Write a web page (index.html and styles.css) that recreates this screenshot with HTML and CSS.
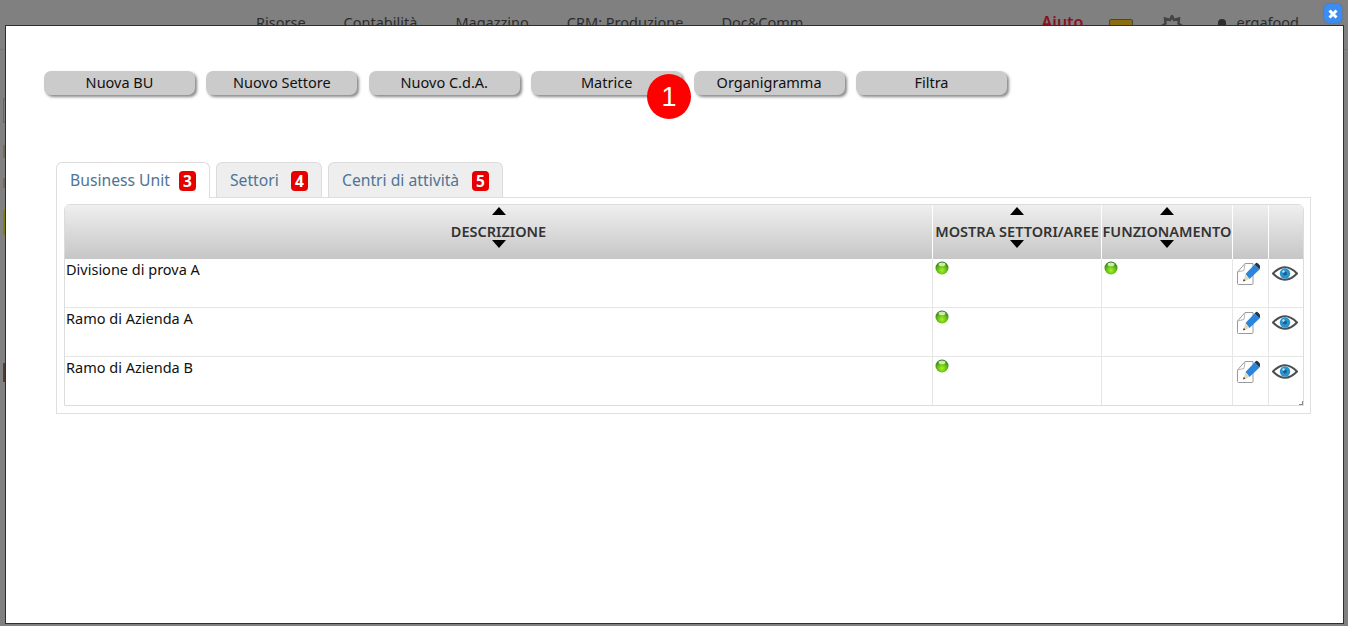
FILE: index.html
```html
<!DOCTYPE html>
<html>
<head>
    <meta name="viewport" content="width=device-width, initial-scale=1.0">
    <title>Business Unit</title>
    <link rel="stylesheet" href="styles.css">
</head>
<body>
<svg class="defs" width="0" height="0">
    <defs>
        <radialGradient id="led" cx="50%" cy="68%" r="62%">
            <stop offset="0" stop-color="#a8f02c"/>
            <stop offset="0.6" stop-color="#62bb12"/>
            <stop offset="1" stop-color="#2f7a1c"/>
        </radialGradient>
        <symbol id="dot" viewBox="0 0 14 14">
            <circle cx="7" cy="7" r="6.500" fill="url(#led)"/>
            <ellipse cx="7" cy="3.400" rx="3.400" ry="1.800" fill="#cfeab0"/>
        </symbol>
        <symbol id="edit" viewBox="0 0 24 26">
            <path d="M9 2.500 H17 V22.500 Q17 23.500 16 23.500 H2.500 Q1.500 23.500 1.500 22.500 V11 Z" fill="#fff" stroke="#9a9a9a" stroke-width="1"/>
            <path d="M9 2.500 L8 9.500 L1.500 11" fill="none" stroke="#b5b5b5" stroke-width="1"/>
            <path d="M9.500 13 L18.500 3.500 L23.500 8.500 L13.500 18 Z" fill="#2a86dc"/>
            <path d="M18.500 3.500 L20 2 Q21 1.500 22 2.500 L24 4.500 Q24.500 5.500 23.500 8.500 Z" fill="#20364f"/>
            <path d="M9.500 13 L13.500 18 L7 20.500 Z" fill="#e8d9bb"/>
            <path d="M7.800 18 L9.500 19.500 L7 20.500 Z" fill="#333"/>
        </symbol>
        <symbol id="eye" viewBox="0 0 26 15">
            <path d="M1 7.500 Q13 -5 25 7.500 Q13 20 1 7.500 Z" fill="#fff" stroke="#4a4f52" stroke-width="2"/>
            <circle cx="13" cy="7.500" r="5.200" fill="#2b93cf"/>
            <circle cx="13" cy="7.500" r="2" fill="#14618f"/>
            <circle cx="11.500" cy="5.500" r="1.200" fill="#bfe4f5"/>
        </symbol>
    </defs>
</svg>

<!-- page behind the dialog -->
<header class="topbar">
    <nav class="topmenu">
        <span>Risorse</span>
        <span>Contabilità</span>
        <span>Magazzino</span>
        <span>CRM: Produzione</span>
        <span>Doc&amp;Comm</span>
    </nav>
    <div class="topright">
        <span class="help">Aiuto</span>
        <span class="mailbox"></span>
        <svg class="gear" width="22" height="22" viewBox="0 0 22 22">
            <path d="M11 1 L13 5 L18 3.500 L17.500 8.500 L21 11 L17.500 13.500 L18 18.500 L13 17 L11 21 L9 17 L4 18.500 L4.500 13.500 L1 11 L4.500 8.500 L4 3.500 L9 5 Z" fill="none" stroke="#444" stroke-width="2.500"/>
        </svg>
        <span class="person"></span>
        <span class="username">ergafood</span>
    </div>
</header>
<div class="sidetraces">
    <span class="trace trace-box"></span>
    <span class="trace trace-brown"></span>
    <span class="trace trace-brown trace-short"></span>
    <span class="trace trace-yellow"></span>
    <span class="trace trace-dark"></span>
</div>

<div class="dialog">
    <div class="toolbar">
        <button class="btn">Nuova BU</button>
        <button class="btn">Nuovo Settore</button>
        <button class="btn">Nuovo C.d.A.</button>
        <button class="btn">Matrice</button>
        <button class="btn">Organigramma</button>
        <button class="btn">Filtra</button>
    </div>

    <div class="tabs">
        <ul class="tablist">
            <li class="tab tab-bu active">Business Unit <b class="count">3</b></li>
            <li class="tab tab-set">Settori <b class="count">4</b></li>
            <li class="tab tab-cda">Centri di attività <b class="count">5</b></li>
        </ul>
        <div class="panel">
            <div class="tablewrap">
                <table class="grid">
                    <colgroup>
                        <col class="col-desc">
                        <col class="col-show">
                        <col class="col-func">
                        <col class="col-edit">
                        <col class="col-view">
                    </colgroup>
                    <thead>
                        <tr>
                            <th><div class="sort"><i class="up"></i><span>DESCRIZIONE</span><i class="down"></i></div></th>
                            <th><div class="sort"><i class="up"></i><span>MOSTRA SETTORI/AREE</span><i class="down"></i></div></th>
                            <th><div class="sort"><i class="up"></i><span>FUNZIONAMENTO</span><i class="down"></i></div></th>
                            <th></th>
                            <th></th>
                        </tr>
                    </thead>
                    <tbody>
                        <tr>
                            <td>Divisione di prova A</td>
                            <td><svg class="led"><use href="#dot"/></svg></td>
                            <td><svg class="led"><use href="#dot"/></svg></td>
                            <td><svg class="ico-edit"><use href="#edit"/></svg></td>
                            <td><svg class="ico-eye"><use href="#eye"/></svg></td>
                        </tr>
                        <tr>
                            <td>Ramo di Azienda A</td>
                            <td><svg class="led"><use href="#dot"/></svg></td>
                            <td></td>
                            <td><svg class="ico-edit"><use href="#edit"/></svg></td>
                            <td><svg class="ico-eye"><use href="#eye"/></svg></td>
                        </tr>
                        <tr>
                            <td>Ramo di Azienda B</td>
                            <td><svg class="led"><use href="#dot"/></svg></td>
                            <td></td>
                            <td><svg class="ico-edit"><use href="#edit"/></svg></td>
                            <td><svg class="ico-eye"><use href="#eye"/></svg></td>
                        </tr>
                    </tbody>
                </table>
                <span class="grip"></span>
            </div>
        </div>
    </div>
</div>

<span class="marker">1</span>
<button class="close" aria-label="Chiudi">
    <svg width="10" height="10" viewBox="0 0 10 10"><path d="M1.500 1.500 L8.500 8.500 M8.500 1.500 L1.500 8.500" stroke="#fff" stroke-width="3"/></svg>
</button>
</body>
</html>
```

FILE: styles.css
```css
* {
    margin: 0;
    padding: 0;
    box-sizing: border-box;
}
html, body {
    height: 100%;
    overflow: hidden;
}
body {
    background: #808080;
    font-family: 'Noto Sans', 'Open Sans', sans-serif;
    font-size: 14.500px;
    color: #111;
}
.defs {
    position: absolute;
}

/* page behind the overlay */
.topbar {
    height: 50px;
    border-bottom: 1px solid #757575;
    display: flex;
    justify-content: space-between;
    padding: 12px 49px 0 256px;
    font-size: 14.500px;
    color: #2c2c2c;
}
.topmenu {
    display: flex;
    gap: 38px;
}
.topright {
    display: flex;
    gap: 26px;
}
.help {
    color: #8c1020;
    font-size: 16px;
    font-weight: 600;
    margin-top: -1px;
}
.mailbox {
    width: 24px;
    height: 14px;
    margin-top: 7px;
    background: #8a6d0c;
    border: 1px solid #444;
    border-radius: 2px;
}
.gear {
    margin: 3px 3px 0 2px;
}
.person {
    width: 8px;
    height: 14px;
    margin: 7px -16px 0 6px;
    background: #2e2e2e;
    border-radius: 4px;
}
.sidetraces {
    display: flex;
    flex-direction: column;
    width: 5px;
    padding-top: 48px;
}
.trace {
    display: block;
    width: 2px;
    margin-left: 3px;
}
.trace-box {
    height: 25px;
    border: 1px solid #666;
    border-right: 0;
}
.trace-brown {
    height: 13px;
    margin-top: 22px;
    background: #74695a;
}
.trace-short {
    height: 10px;
    margin-top: 20px;
}
.trace-yellow {
    height: 25px;
    margin-top: 22px;
    background: #80800c;
}
.trace-dark {
    height: 19px;
    margin-top: 128px;
    background: #533a33;
}

/* dialog */
.dialog {
    position: fixed;
    left: 5px;
    top: 25px;
    width: 1339px;
    height: 599px;
    background: #fff;
    border: 1px solid #2f2f2f;
    padding: 45px 0 0 38px;
}
.toolbar {
    display: flex;
    gap: 11.400px;
}
.btn {
    width: 151px;
    height: 24px;
    padding-bottom: 2px;
    border: 0;
    border-radius: 7px;
    background: #cbcbcb;
    box-shadow: 2px 2px 3px #888;
    font-family: inherit;
    font-size: 14.500px;
    color: #111;
}
.tabs {
    width: 1255px;
    margin: 67px 0 0 12px;
}
.tablist {
    display: flex;
    gap: 6px;
    align-items: flex-start;
    list-style: none;
    position: relative;
    z-index: 1;
}
.tab {
    display: flex;
    height: 35px;
    padding: 7px 13px 0 13px;
    border: 1px solid #dcdcdc;
    border-bottom: 0;
    border-radius: 6px 6px 0 0;
    background: #eee;
    color: #4f7496;
    font-size: 15.700px;
    line-height: 20px;
    white-space: nowrap;
}
.tab.active {
    height: 36px;
    background: #fff;
}
.tab-bu { width: 154px; }
.tab-set { width: 106px; }
.tab-cda { width: 175px; }
.count {
    width: 17px;
    height: 20px;
    margin: 1px 0 0 auto;
    border-radius: 4px;
    background: #e60000;
    color: #fff;
    font-size: 15.500px;
    line-height: 20px;
    text-align: center;
}
.panel {
    height: 217px;
    margin-top: -1px;
    border: 1px solid #dfdfdf;
    padding: 6px 6px 0 7px;
}
.tablewrap {
    position: relative;
    width: 1240px;
    height: 202px;
    border: 1px solid #dcdcdc;
    border-radius: 6px 6px 0 0;
    overflow: hidden;
}
.grid {
    width: 100%;
    table-layout: fixed;
    border-collapse: separate;
    border-spacing: 0;
}
.col-desc { width: 867px; }
.col-show { width: 169px; }
.col-func { width: 131px; }
.col-edit { width: 36px; }
.col-view { width: 35px; }
.grid th {
    height: 54px;
    padding: 2px 0 0;
    background: linear-gradient(#efefef, #c6c6c6);
    border-left: 1px solid #fff;
    vertical-align: top;
    font-size: 14.500px;
    font-weight: 600;
    color: #333;
}
.grid th:first-child {
    border-left: 0;
}
.sort {
    display: flex;
    flex-direction: column;
    align-items: center;
    white-space: nowrap;
}
.sort span {
    line-height: 18px;
    margin-top: 7px;
}
.up, .down {
    width: 0;
    height: 0;
    border-left: 7px solid transparent;
    border-right: 7px solid transparent;
}
.up {
    border-bottom: 8px solid #000;
}
.down {
    border-top: 8px solid #000;
}
.grid td {
    height: 49px;
    padding: 0 1px;
    border-left: 1px solid #e6e6e6;
    border-bottom: 1px solid #e6e6e6;
    vertical-align: top;
    font-size: 14.500px;
    line-height: 20px;
    color: #111;
}
.grid td:first-child {
    border-left: 0;
}
.led {
    display: block;
    width: 14px;
    height: 14px;
    margin: 2px 0 0 1px;
}
.ico-edit {
    display: block;
    width: 24px;
    height: 26px;
    margin: 2px 0 0 2px;
}
.ico-eye {
    display: block;
    width: 26px;
    height: 15px;
    margin: 7px 0 0 2px;
}
.grip {
    position: absolute;
    right: 0;
    bottom: 0;
    width: 4px;
    height: 4px;
    border-right: 1px solid #888;
    border-bottom: 1px solid #888;
}

/* overlays */
.marker {
    position: fixed;
    left: 647px;
    top: 74px;
    width: 44px;
    height: 45px;
    border-radius: 50%;
    background: #f00;
    color: #fff;
    font-family: 'Liberation Sans', sans-serif;
    font-size: 27px;
    line-height: 46px;
    text-align: center;
}
.close {
    position: fixed;
    left: 1324px;
    top: 4px;
    width: 18px;
    height: 19px;
    border: 0;
    border-radius: 5px;
    background: #3b8df2;
    box-shadow: 0 0 2px #2a6fc8;
    display: flex;
    align-items: center;
    justify-content: center;
}
```
